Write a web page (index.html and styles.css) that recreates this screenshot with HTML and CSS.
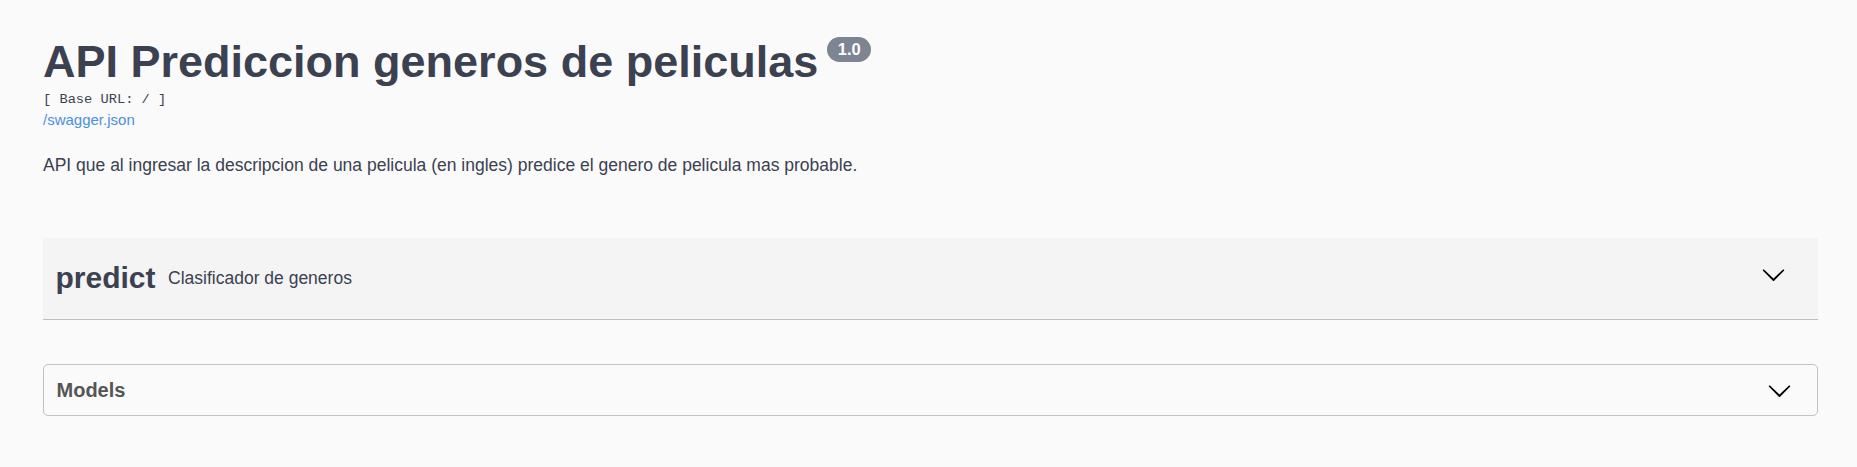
FILE: index.html
```html
<!DOCTYPE html>
<html lang="es">
<head>
<meta charset="utf-8">
<title>API Prediccion generos de peliculas</title>
<link rel="stylesheet" href="styles.css">
</head>
<body>
<div class="wrapper">
  <section class="info">
    <h2 class="title"><span class="title-text">API Prediccion generos de peliculas</span><small class="version">1.0</small></h2>
    <pre class="base-url">[ Base URL: / ]</pre>
    <a class="spec-link" href="#">/swagger.json</a>
    <p class="description">API que al ingresar la descripcion de una pelicula (en ingles) predice el genero de pelicula mas probable.</p>
  </section>

  <section class="tag-section">
    <h3 class="opblock-tag">
      <span class="tag-name">predict</span>
      <small class="tag-desc">Clasificador de generos</small>
      <svg class="arrow tag-arrow" width="25" height="25" viewBox="0 0 20 20" aria-hidden="true"><path d="M17.418 6.109c.272-.268.709-.268.979 0s.271.701 0 .969l-7.908 7.83c-.27.268-.707.268-.979 0l-7.908-7.83c-.27-.268-.27-.701 0-.969.271-.268.709-.268.979 0L10 13.25l7.418-7.141z"/></svg>
    </h3>
  </section>

  <section class="models">
    <h4 class="models-head">
      <span>Models</span>
      <svg class="arrow" width="25" height="25" viewBox="0 0 20 20" aria-hidden="true"><path d="M17.418 6.109c.272-.268.709-.268.979 0s.271.701 0 .969l-7.908 7.83c-.27.268-.707.268-.979 0l-7.908-7.83c-.27-.268-.27-.701 0-.969.271-.268.709-.268.979 0L10 13.25l7.418-7.141z"/></svg>
    </h4>
  </section>
</div>
</body>
</html>
```

FILE: styles.css
```css
html, body {
  margin: 0;
  padding: 0;
  background: #fafafa;
}

body {
  font-family: "Liberation Sans", Arial, Helvetica, sans-serif;
  color: #3b4151;
}

.wrapper {
  box-sizing: border-box;
  width: 1857px;
  padding: 36px 39px 40px 43px;
  display: flex;
  flex-direction: column;
}

.info {
  display: flex;
  flex-direction: column;
  align-items: flex-start;
}

.title {
  display: flex;
  align-items: flex-start;
  margin: 0;
  font-size: 45px;
  line-height: 52px;
  font-weight: 700;
  color: #3b4151;
}

.version {
  margin: 0.7px 0 0 9px;
  padding: 0 10.5px;
  height: 25px;
  line-height: 25px;
  font-size: 16.5px;
  font-weight: 700;
  color: #fff;
  background: #7d8492;
  border-radius: 57px;
}

.base-url {
  margin: 2.5px 0 0;
  font-family: "Liberation Mono", "Courier New", monospace;
  font-size: 13.7px;
  font-weight: 400;
  line-height: 17px;
  color: #3b4151;
}

.spec-link {
  margin-top: 3px;
  font-size: 15px;
  line-height: 18px;
  color: #4990e2;
  text-decoration: none;
}

.description {
  margin: 25.4px 0 0;
  font-size: 17.5px;
  line-height: 22px;
  color: #3b4151;
}

.tag-section {
  margin-top: 62px;
}

.opblock-tag {
  display: flex;
  align-items: center;
  box-sizing: border-box;
  height: 82px;
  margin: 0;
  padding: 0 32px 0 12.5px;
  background: #f4f4f4;
  border-bottom: 1px solid rgba(59, 65, 81, 0.3);
  font-weight: 700;
}

.tag-name {
  font-size: 30px;
  line-height: 1.15;
  color: #3b4151;
}

.tag-desc {
  flex: 1;
  padding: 0 12.5px;
  font-size: 17.5px;
  font-weight: 400;
  line-height: 1.15;
  color: #3b4151;
}

.arrow {
  display: block;
  flex: none;
  fill: #000;
}

.tag-arrow {
  align-self: flex-start;
  margin-top: 24px;
}

.models {
  margin-top: 44.5px;
  border: 1px solid rgba(59, 65, 81, 0.3);
  border-radius: 5px;
}

.models-head {
  display: flex;
  align-items: center;
  justify-content: space-between;
  margin: 0;
  padding: 12.5px 25px 12.5px 12.5px;
  font-size: 20px;
  line-height: 1.15;
  font-weight: 700;
  color: #555;
}
```
